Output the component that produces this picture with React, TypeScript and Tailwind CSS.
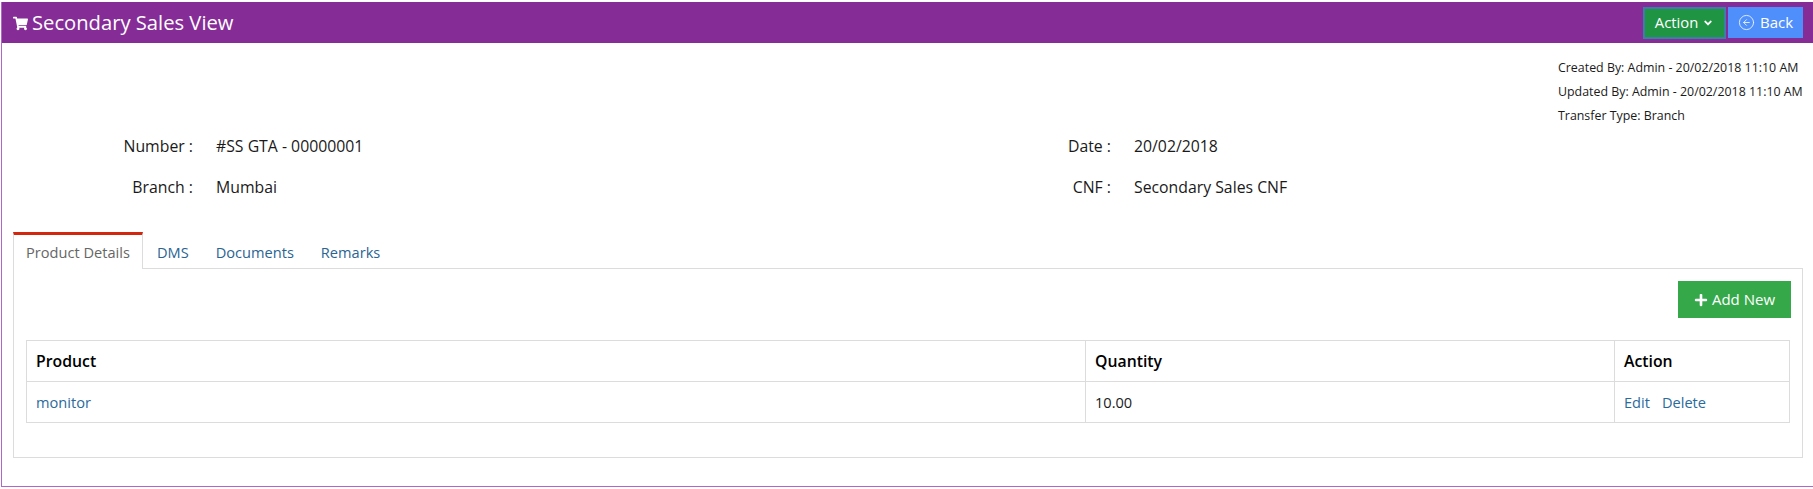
import { CircleArrowLeft } from "lucide-react";
import { FaAngleDown, FaPlus, FaShoppingCart } from "react-icons/fa";

const tabs = ["DMS", "Documents", "Remarks"];

function InfoRow({ label, value }: { label: string; value: string }) {
  return (
    <div className="flex items-center">
      <div className="w-[191px] text-right">{label} :</div>
      <div className="pl-[23px]">{value}</div>
    </div>
  );
}

export default function App() {
  return (
    <div className="h-[489px] pt-[2px] pl-px bg-white font-['Open_Sans',sans-serif] text-[15.8px] text-[#1a1a1a] overflow-hidden">
      <div className="h-[485px] border-l border-b border-[#b266c8] flex flex-col">
        <div className="h-[41px] shrink-0 bg-[#852c97] flex items-center justify-between pr-[10px]">
          <div className="flex items-center pl-[11px] text-white text-[20.2px]">
            <FaShoppingCart className="w-[15px] h-[15px] mr-[4px] mt-[2px]" />
            <span>Secondary Sales View</span>
          </div>
          <div className="flex items-center gap-[2px]">
            <button className="w-[83px] h-[32px] flex items-center justify-center gap-[4px] bg-[#1f9443] border-2 border-[#3b7fa6] text-white text-[14.8px]">
              Action
              <FaAngleDown className="w-[12px] h-[12px] mt-[1px]" />
            </button>
            <button className="w-[75px] h-[31px] flex items-center justify-center gap-[5px] bg-[#4f8ffb] text-white text-[15px]">
              <CircleArrowLeft className="w-[17px] h-[17px] opacity-90" strokeWidth={1.25} />
              Back
            </button>
          </div>
        </div>

        <div className="flex justify-end pt-[13px] text-[12.4px] leading-[24px] h-[85px] shrink-0">
          <div className="w-[255px]">
            <div>Created By: Admin - 20/02/2018 11:10 AM</div>
            <div>Updated By: Admin - 20/02/2018 11:10 AM</div>
            <div>Transfer Type: Branch</div>
          </div>
        </div>

        <div className="flex flex-col gap-[21px] leading-[20px] h-[104px] shrink-0 pt-[8px]">
          <div className="flex">
            <div className="w-[918px]"><InfoRow label="Number" value="#SS GTA - 00000001" /></div>
            <InfoRow label="Date" value="20/02/2018" />
          </div>
          <div className="flex">
            <div className="w-[918px]"><InfoRow label="Branch" value="Mumbai" /></div>
            <InfoRow label="CNF" value="Secondary Sales CNF" />
          </div>
        </div>

        <div className="mx-[11px] w-[1790px] shrink-0">
          <div className="flex h-[37px] text-[14.6px] relative z-10">
            <div className="w-[130px] h-[37px] pt-px border-t-[3px] border-t-[#d3260e] border-r border-l border-[#dcdcdc] bg-white text-[#666] flex items-center justify-center">
              Product Details
            </div>
            <div className="flex items-center pl-[14px] gap-[27px] pt-[5px] text-[#2b6492]">
              {tabs.map((t) => (
                <span key={t}>{t}</span>
              ))}
            </div>
          </div>
          <div className="h-[190px] -mt-px border border-[#dcdcdc] px-[12px] pt-[12px]">
            <div className="flex justify-end">
              <button className="w-[113px] h-[37px] -mr-px flex items-center justify-center gap-[4px] bg-[#35a84a] text-white text-[15px]">
                <FaPlus className="w-[14px] h-[14px]" />
                Add New
              </button>
            </div>
            <div className="mt-[22px] border border-[#dcdcdc] grid grid-cols-[1058px_529px_1fr] text-[14.6px]">
              <div className="h-[41px] flex items-center pl-[9px] pt-px text-[15.8px] font-semibold text-black border-b border-[#dcdcdc]">Product</div>
              <div className="h-[41px] flex items-center pl-[9px] pt-px text-[15.8px] font-semibold text-black border-b border-l border-[#dcdcdc]">Quantity</div>
              <div className="h-[41px] flex items-center pl-[9px] pt-px text-[15.8px] font-semibold text-black border-b border-l border-[#dcdcdc]">Action</div>
              <div className="h-[40px] flex items-center pl-[9px] pt-px text-[#2b6a9b]">monitor</div>
              <div className="h-[40px] flex items-center pl-[9px] pt-px border-l border-[#dcdcdc]">10.00</div>
              <div className="h-[40px] flex items-center pl-[9px] pt-px gap-[12px] border-l border-[#dcdcdc] text-[#2b6a9b]">
                <span>Edit</span>
                <span>Delete</span>
              </div>
            </div>
          </div>
        </div>
      </div>
    </div>
  );
}
